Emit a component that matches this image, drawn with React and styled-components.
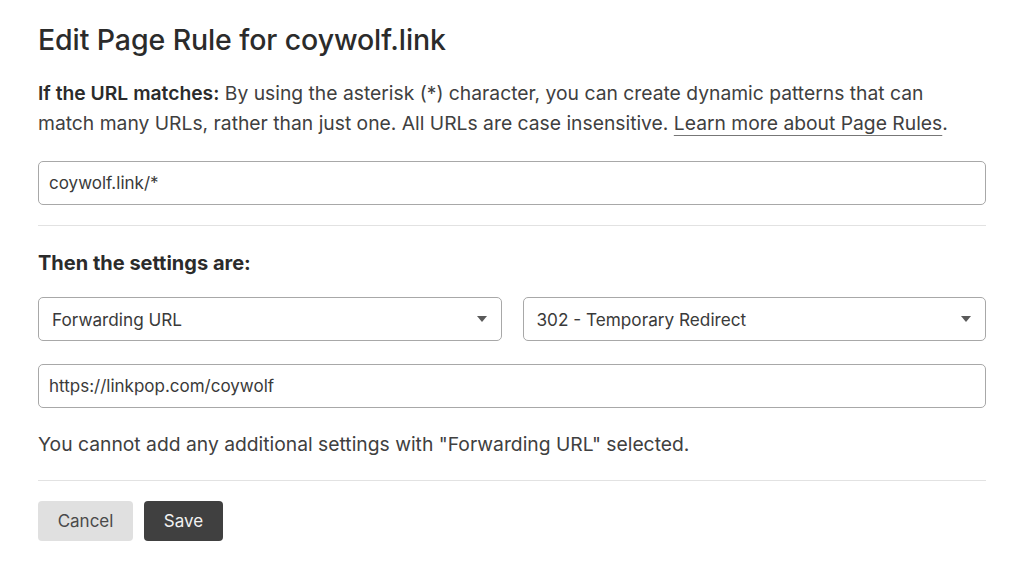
import styled, { createGlobalStyle } from "styled-components";

const GlobalStyle = createGlobalStyle`
  body {
    margin: 0;
    background: #fff;
    font-family: Inter, "Helvetica Neue", Arial, sans-serif;
    color: #333;
  }
`;

const Container = styled.div`
  width: 948px;
  padding: 22px 38px 0;
`;

const Title = styled.h1`
  margin: 0 0 20px;
  font-size: 28.5px;
  font-weight: 500;
  color: #2b2b2b;
  line-height: 36px;
  letter-spacing: -0.1px;
`;

const Intro = styled.p`
  margin: 0 0 23px;
  font-size: 19.3px;
  line-height: 30px;
  color: #404040;
  b { color: #2b2b2b; font-weight: 600; }
  a {
    color: #404040;
    text-decoration: underline;
    text-decoration-color: #777;
    text-underline-offset: 5px;
  }
`;

const Field = styled.div`
  box-sizing: border-box;
  height: 44px;
  border: 1px solid #a8a8a8;
  border-radius: 5px;
  display: flex;
  align-items: center;
  padding: 0 10px;
  font-size: 17px;
  color: #3a3a3a;
  background: #fff;
`;

const Divider = styled.hr`
  border: none;
  border-top: 1px solid #e2e2e2;
  margin: ${(p) => p.$top}px 0 ${(p) => p.$bottom}px;
`;

const Subheading = styled.h2`
  margin: 0 0 22px;
  font-size: 20px;
  font-weight: 700;
  color: #2b2b2b;
  line-height: 24px;
`;

const SelectRow = styled.div`
  display: flex;
  gap: 21px;
  margin-bottom: 23px;
`;

const Select = styled(Field)`
  flex: 1;
  justify-content: space-between;
  padding: 0 14px 0 13px;
  font-size: 17.2px;
`;

const Caret = styled.span`
  width: 0;
  height: 0;
  border-left: 5px solid transparent;
  border-right: 5px solid transparent;
  border-top: 6px solid #5a5a5a;
`;

const Note = styled.p`
  margin: 22px 0 0;
  font-size: 19.3px;
  line-height: 28px;
  color: #404040;
`;

const Buttons = styled.div`
  display: flex;
  gap: 11px;
`;

const Button = styled.button`
  height: 40px;
  width: ${(p) => p.$width}px;
  padding: 0;
  border: none;
  border-radius: 4px;
  font-family: inherit;
  font-size: 17px;
  background: ${(p) => (p.$primary ? "#404040" : "#e0e0e0")};
  color: ${(p) => (p.$primary ? "#f2f2f2" : "#4a4a4a")};
`;

const App = () => {
  return (
    <>
      <GlobalStyle />
      <Container>
        <Title>Edit Page Rule for coywolf.link</Title>
        <Intro>
          <b>If the URL matches:</b> By using the asterisk (*) character, you can
          create dynamic patterns that can
          <br />
          match many URLs, rather than just one. All URLs are case insensitive.{" "}
          <a href="#">Learn more about Page Rules</a>.
        </Intro>
        <Field>coywolf.link/*</Field>
        <Divider $top={20} $bottom={25} />
        <Subheading>Then the settings are:</Subheading>
        <SelectRow>
          <Select>
            Forwarding URL
            <Caret />
          </Select>
          <Select>
            302 - Temporary Redirect
            <Caret />
          </Select>
        </SelectRow>
        <Field>https://linkpop.com/coywolf</Field>
        <Note>You cannot add any additional settings with "Forwarding URL" selected.</Note>
        <Divider $top={22} $bottom={20} />
        <Buttons>
          <Button $width={95}>Cancel</Button>
          <Button $primary $width={79}>Save</Button>
        </Buttons>
      </Container>
    </>
  );
};

export default App;
